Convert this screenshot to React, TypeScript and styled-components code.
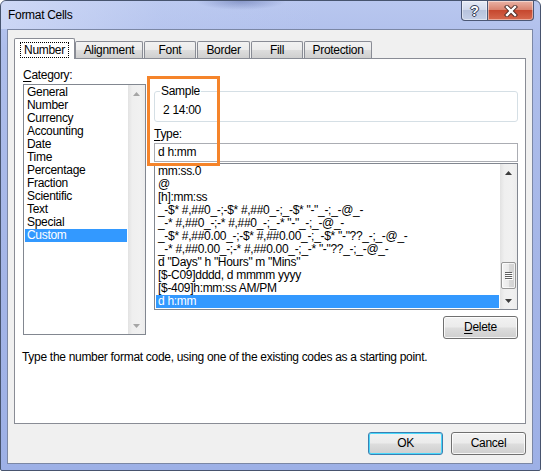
import React from "react";
import styled, { createGlobalStyle } from "styled-components";

const UI_FONT = `"Liberation Sans", Arial, sans-serif`;

const GlobalStyle = createGlobalStyle`
  html, body { margin: 0; padding: 0; background: #ffffff; }
  * { box-sizing: border-box; }
`;

const Window = styled.div`
  width: 541px;
  height: 471px;
  border: 1px solid #47546e;
  border-radius: 6px 6px 2px 2px;
  background:
    linear-gradient(180deg, #b9c7ef 0%, #aebeeb 10%, #a4b5e7 60%, #9db0e6 100%);
  display: flex;
  flex-direction: column;
  overflow: hidden;
  font: 12px/15px ${UI_FONT};
  letter-spacing: -0.3px;
  color: #000;
`;

const TitleBar = styled.div`
  height: 28px;
  display: flex;
  justify-content: space-between;
  align-items: flex-start;
  padding-left: 7px;
  padding-right: 6px;
  background:
    radial-gradient(ellipse 45px 9px at 240px 0px, rgba(95, 112, 170, 0.55), rgba(95, 112, 170, 0) 100%),
    linear-gradient(90deg, rgba(220, 228, 250, 0.6) 0%, rgba(200, 212, 245, 0.2) 30%, rgba(180, 195, 240, 0) 60%);
`;

const Title = styled.span`
  margin-top: 7px;
  font-size: 12px;
  line-height: 15px;
  color: #000;
`;

const CaptionGroup = styled.div`
  display: flex;
`;

const CaptionButton = styled.div<{ $kind: "help" | "close" }>`
  width: ${(p) => (p.$kind === "help" ? 27 : 46)}px;
  height: 20px;
  display: flex;
  align-items: center;
  justify-content: center;
  border: 1px solid #4b5775;
  border-top: none;
  border-left: ${(p) => (p.$kind === "close" ? "none" : "1px solid #4b5775")};
  border-radius: ${(p) => (p.$kind === "help" ? "0 0 0 4px" : "0 0 4px 0")};
  background: ${(p) =>
    p.$kind === "help"
      ? "linear-gradient(180deg, #e6ebf6 0%, #d2daec 45%, #b7c3dd 50%, #c5d0e8 100%)"
      : "linear-gradient(180deg, #eab3a6 0%, #da8571 45%, #c6482f 50%, #d6694e 100%)"};
  box-shadow: inset 0 0 0 1px rgba(255, 255, 255, 0.45);
`;

const HelpGlyph = styled.span`
  font: bold 14px/14px ${UI_FONT};
  letter-spacing: 0;
  color: #ffffff;
  text-shadow: 0 0 1px #2c3650, 0 0 1px #2c3650, 1px 0 0 #3c465f, -1px 0 0 #3c465f, 0 1px 0 #3c465f, 0 -1px 0 #3c465f;
`;

const Client = styled.div`
  flex: 1;
  margin: 0 7px 6px 6px;
  border: 1px solid #7b87a5;
  background: #f0f0f0;
  padding: 0 6px 8px 6px;
  display: flex;
  flex-direction: column;
`;

const TabStrip = styled.div`
  height: 28px;
  display: flex;
  align-items: flex-end;
`;

const Tab = styled.div<{ $active?: boolean; $w: number }>`
  position: relative;
  width: ${(p) => p.$w}px;
  height: ${(p) => (p.$active ? 21 : 17)}px;
  margin-bottom: ${(p) => (p.$active ? -1 : 0)}px;
  margin-right: ${(p) => (p.$active ? 0 : 1)}px;
  border: 1px solid #898c95;
  border-bottom: none;
  border-radius: 2px 2px 0 0;
  background: ${(p) =>
    p.$active ? "#ffffff" : "linear-gradient(180deg, #f2f2f2 0%, #ebebeb 50%, #dddddd 51%, #cfcfcf 100%)"};
  z-index: ${(p) => (p.$active ? 1 : 0)};
  display: flex;
  justify-content: center;
  align-items: ${(p) => (p.$active ? "flex-start" : "center")};
  padding-top: ${(p) => (p.$active ? 3 : 0)}px;
`;

const FocusLabel = styled.span`
  padding: 0 3px;
  height: 16px;
  line-height: 14px;
  border: 1px dotted #000;
`;

const Panel = styled.div`
  height: 366px;
  border: 1px solid #898c95;
  background: #ffffff;
  padding: 9px 7px 0 7px;
  display: flex;
  flex-direction: column;
`;

const Columns = styled.div`
  margin-left: 1px;
  display: grid;
  grid-template-columns: 123px 364px;
  column-gap: 8px;
`;

const Column = styled.div`
  position: relative;
  display: flex;
  flex-direction: column;
`;

const Label = styled.div<{ $mt?: number }>`
  line-height: 15px;
  margin-top: ${(p) => p.$mt ?? 0}px;
`;

const Acc = styled.span`
  text-decoration: underline;
  text-underline-offset: 2px;
`;

const ListBox = styled.div<{ $h: number; $mt: number }>`
  height: ${(p) => p.$h}px;
  margin-top: ${(p) => p.$mt}px;
  border: 1px solid #828790;
  background: #fff;
  display: flex;
`;

const Items = styled.div`
  flex: 1;
  padding: 1px 1px 0 1px;
  overflow: hidden;
`;

const Item = styled.div<{ $sel?: boolean }>`
  height: 13px;
  line-height: 13px;
  padding-left: 2px;
  white-space: nowrap;
  background: ${(p) => (p.$sel ? "#3399ff" : "transparent")};
  color: ${(p) => (p.$sel ? "#ffffff" : "#000000")};
`;

const ScrollBar = styled.div`
  width: 17px;
  display: flex;
  flex-direction: column;
  background: linear-gradient(90deg, #e2e2e2 0%, #efefef 25%, #f1f1f1 70%, #ececec 100%);
`;

const ArrowBox = styled.div`
  height: 17px;
  display: flex;
  align-items: center;
  justify-content: center;
`;

const Track = styled.div<{ $thumbTop: number }>`
  flex: 1;
  padding-top: ${(p) => p.$thumbTop}px;
  padding-left: 1px;
`;

const Thumb = styled.div`
  width: 15px;
  height: 27px;
  border: 1px solid #979797;
  border-radius: 2px;
  background: linear-gradient(90deg, #f4f4f4 0%, #eaeaea 50%, #d9d9d9 51%, #d2d2d2 100%);
  box-shadow: inset 0 0 0 1px rgba(255, 255, 255, 0.7);
  display: flex;
  align-items: center;
  justify-content: center;
`;

const SampleBox = styled.fieldset`
  margin: 16px 0 0 0;
  padding: 6px 4px 4px 5px;
  border: 1px solid #d5dfe5;
  border-radius: 3px;
  min-width: 0;
`;

const Legend = styled.legend`
  padding: 0 1px;
  line-height: 14px;
  font-size: 12px;
`;

const SampleValue = styled.div`
  height: 13px;
  line-height: 13px;
  padding-left: 3px;
`;

const TypeInput = styled.div`
  margin-top: 1px;
  height: 19px;
  border: 1px solid #abadb3;
  border-top-color: #abadb3;
  background: #fff;
  padding-left: 3px;
  line-height: 17px;
`;

const Highlight = styled.div`
  position: absolute;
  left: -7px;
  top: 8px;
  width: 73px;
  height: 90px;
  border: 3px solid #f5842a;
  pointer-events: none;
`;

const Button = styled.div<{ $default?: boolean }>`
  width: 75px;
  height: 23px;
  border: 1px solid ${(p) => (p.$default ? "#3c7fb1" : "#707070")};
  border-radius: 3px;
  background: linear-gradient(180deg, #f2f2f2 0%, #ebebeb 48%, #dddddd 52%, #cfcfcf 100%);
  box-shadow: inset 0 0 0 1px ${(p) => (p.$default ? "#48d8fb" : "rgba(255,255,255,0.8)")};
  display: flex;
  align-items: center;
  justify-content: center;
  line-height: 15px;
`;

const DeleteRow = styled.div`
  margin-top: 6px;
  display: flex;
  justify-content: flex-end;
`;

const Description = styled.div`
  margin-top: 11px;
  line-height: 15px;
`;

const ButtonRow = styled.div`
  margin-top: 8px;
  display: flex;
  justify-content: flex-end;
  gap: 8px;
`;

const UpArrow = ({ color }: { color: string }) => (
  <svg width="7" height="4" viewBox="0 0 7 4">
    <polygon points="3.5,0 7,4 0,4" fill={color} />
  </svg>
);
const DownArrow = ({ color }: { color: string }) => (
  <svg width="7" height="4" viewBox="0 0 7 4">
    <polygon points="0,0 7,0 3.5,4" fill={color} />
  </svg>
);

const Grip = () => (
  <svg width="8" height="8" viewBox="0 0 8 8">
    {[0, 2, 4, 6].map((y) => (
      <g key={y}>
        <rect x="0" y={y} width="7" height="1" fill="#5f5f5f" />
        <rect x="1" y={y + 1} width="7" height="1" fill="#ffffff" />
      </g>
    ))}
  </svg>
);

const CloseGlyph = () => (
  <svg width="14" height="12" viewBox="0 0 14 12">
    <path d="M3 2 L11 10 M11 2 L3 10" stroke="#4a2a25" strokeWidth="4.2" strokeLinecap="square" />
    <path d="M3 2 L11 10 M11 2 L3 10" stroke="#ffffff" strokeWidth="2.4" strokeLinecap="square" />
  </svg>
);

const categories = [
  "General",
  "Number",
  "Currency",
  "Accounting",
  "Date",
  "Time",
  "Percentage",
  "Fraction",
  "Scientific",
  "Text",
  "Special",
  "Custom",
];

const formats = [
  "mm:ss.0",
  "@",
  "[h]:mm:ss",
  '_-$* #,##0_-;-$* #,##0_-;_-$* "-"_-;_-@_-',
  '_-* #,##0_-;-* #,##0_-;_-* "-"_-;_-@_-',
  '_-$* #,##0.00_-;-$* #,##0.00_-;_-$* "-"??_-;_-@_-',
  '_-* #,##0.00_-;-* #,##0.00_-;_-* "-"??_-;_-@_-',
  'd "Days" h "Hours" m "Mins"',
  "[$-C09]dddd, d mmmm yyyy",
  "[$-409]h:mm:ss AM/PM",
  "d h:mm",
];

const tabs: { label: string; w: number }[] = [
  { label: "Alignment", w: 68 },
  { label: "Font", w: 52 },
  { label: "Border", w: 53 },
  { label: "Fill", w: 52 },
  { label: "Protection", w: 68 },
];

export default function App() {
  return (
    <>
      <GlobalStyle />
      <Window>
        <TitleBar>
          <Title>Format Cells</Title>
          <CaptionGroup>
            <CaptionButton $kind="help">
              <HelpGlyph>?</HelpGlyph>
            </CaptionButton>
            <CaptionButton $kind="close">
              <CloseGlyph />
            </CaptionButton>
          </CaptionGroup>
        </TitleBar>
        <Client>
          <TabStrip>
            <Tab $active $w={61}>
              <FocusLabel>Number</FocusLabel>
            </Tab>
            {tabs.map((t) => (
              <Tab key={t.label} $w={t.w}>
                {t.label}
              </Tab>
            ))}
          </TabStrip>
          <Panel>
            <Columns>
              <Column>
                <Label>
                  <Acc>C</Acc>ategory:
                </Label>
                <ListBox $h={251} $mt={1}>
                  <Items>
                    {categories.map((c) => (
                      <Item key={c} $sel={c === "Custom"}>
                        {c}
                      </Item>
                    ))}
                  </Items>
                  <ScrollBar>
                    <ArrowBox>
                      <UpArrow color="#a6a6a6" />
                    </ArrowBox>
                    <Track $thumbTop={0} />
                    <ArrowBox>
                      <DownArrow color="#a6a6a6" />
                    </ArrowBox>
                  </ScrollBar>
                </ListBox>
              </Column>
              <Column>
                <SampleBox>
                  <Legend>Sample</Legend>
                  <SampleValue>2 14:00</SampleValue>
                </SampleBox>
                <Label $mt={5}>
                  <Acc>T</Acc>ype:
                </Label>
                <TypeInput>d h:mm</TypeInput>
                <ListBox $h={147} $mt={1}>
                  <Items>
                    {formats.map((f) => (
                      <Item key={f} $sel={f === "d h:mm"}>
                        {f}
                      </Item>
                    ))}
                  </Items>
                  <ScrollBar>
                    <ArrowBox>
                      <UpArrow color="#3d3d3d" />
                    </ArrowBox>
                    <Track $thumbTop={81}>
                      <Thumb>
                        <Grip />
                      </Thumb>
                    </Track>
                    <ArrowBox>
                      <DownArrow color="#3d3d3d" />
                    </ArrowBox>
                  </ScrollBar>
                </ListBox>
                <DeleteRow>
                  <Button>
                    <Acc>D</Acc>elete
                  </Button>
                </DeleteRow>
                <Highlight />
              </Column>
            </Columns>
            <Description>
              Type the number format code, using one of the existing codes as a starting point.
            </Description>
          </Panel>
          <ButtonRow>
            <Button $default>OK</Button>
            <Button>Cancel</Button>
          </ButtonRow>
        </Client>
      </Window>
    </>
  );
}
